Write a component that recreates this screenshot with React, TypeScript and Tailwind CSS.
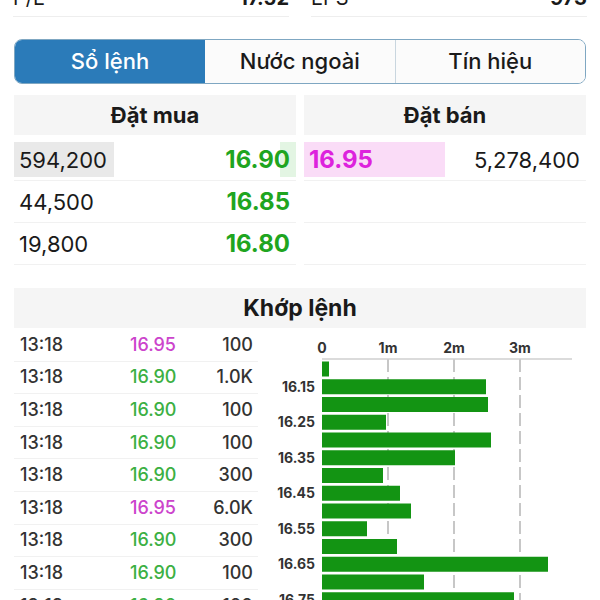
import React from "react";

const trades = [
  { t: "13:18", p: "16.95", v: "100", up: true },
  { t: "13:18", p: "16.90", v: "1.0K", up: false },
  { t: "13:18", p: "16.90", v: "100", up: false },
  { t: "13:18", p: "16.90", v: "100", up: false },
  { t: "13:18", p: "16.90", v: "300", up: false },
  { t: "13:18", p: "16.95", v: "6.0K", up: true },
  { t: "13:18", p: "16.90", v: "300", up: false },
  { t: "13:18", p: "16.90", v: "100", up: false },
  { t: "13:18", p: "16.90", v: "100", up: false },
];

const bars = [7, 164, 166, 64, 169, 133, 61, 78, 89, 45, 75, 226, 102, 192];
const labels: Record<number, string> = {
  1: "16.15",
  3: "16.25",
  5: "16.35",
  7: "16.45",
  9: "16.55",
  11: "16.65",
  13: "16.75",
};

function Chart() {
  const x0 = 64;
  return (
    <svg width="342" height="272" className="block shrink-0" style={{ fontFamily: "Inter, sans-serif" }}>
      {["0", "1m", "2m", "3m"].map((l, i) => (
        <text key={l} x={x0 + i * 66} y={25} fontSize="14" fontWeight="700" fill="#333" textAnchor="middle">
          {l}
        </text>
      ))}
      {[1, 2, 3].map((i) => (
        <line key={i} x1={x0 + i * 66} x2={x0 + i * 66} y1={31} y2={272} stroke="#b5b5b5" strokeWidth="1.5" strokeDasharray="13 5" />
      ))}
      <line x1={x0} x2={314} y1={31} y2={31} stroke="#cfcfcf" strokeWidth="1.5" />
      {bars.map((w, i) => {
        const y = 33.5 + i * 17.75;
        return (
          <g key={i}>
            <rect x={x0} y={y} width={w} height={15} fill="#139413" />
            {labels[i] && (
              <text x={57} y={y + 12.5} fontSize="14" fontWeight="700" fill="#333" textAnchor="end">
                {labels[i]}
              </text>
            )}
          </g>
        );
      })}
    </svg>
  );
}

export default function App() {
  return (
    <div
      className="w-[600px] h-[600px] overflow-hidden bg-white text-[#1a1a1a]"
      style={{ fontFamily: "Inter, 'Noto Sans', sans-serif" }}
    >
      {/* Top stats row (cut off) */}
      <div className="flex gap-[22px] px-[13px] -mt-[21px]">
        <div className="flex-1 h-[38px] flex items-center justify-between border-b border-[#eeeeee] text-[20px] leading-none">
          <span>P/E</span>
          <span className="font-bold">17.52</span>
        </div>
        <div className="flex-1 h-[38px] flex items-center justify-between border-b border-[#eeeeee] text-[20px] leading-none">
          <span>EPS</span>
          <span className="font-bold">973</span>
        </div>
      </div>

      {/* Tabs */}
      <div className="mx-[14px] mt-[22px] h-[45px] flex rounded-[8px] border border-[#7fa7c2] overflow-hidden text-[22px] font-medium">
        <div className="w-[190px] flex items-center justify-center bg-[#2b7bb9] text-white">Sổ lệnh</div>
        <div className="flex-1 flex items-center justify-center bg-[#fbfbfb] border-r border-[#c9d6df]">Nước ngoài</div>
        <div className="flex-1 flex items-center justify-center bg-[#fbfbfb]">Tín hiệu</div>
      </div>

      {/* Order book */}
      <div className="mx-[14px] mt-[11px] flex gap-[8px]">
        <div className="flex-1">
          <div className="h-[40px] flex items-center justify-center bg-[#f5f5f5] text-[22px] font-bold">Đặt mua</div>
          <div className="mt-[4px]">
            {[
              ["594,200", "16.90", 100, 16],
              ["44,500", "16.85", 0, 0],
              ["19,800", "16.80", 0, 0],
            ].map(([v, p, wl, wr], i) => (
              <div key={i} className="relative h-[42px] flex items-center justify-between border-b border-[#f1f1f1] text-[22px] leading-none">
                {(wl as number) > 0 && (
                  <div className="absolute left-0 top-[3px] bottom-[3px] bg-[#e9e9e9]" style={{ width: wl as number }} />
                )}
                {(wr as number) > 0 && (
                  <div className="absolute right-0 top-[3px] bottom-[3px] bg-[#e3f5e3]" style={{ width: wr as number }} />
                )}
                <span className="relative pl-[5px]">{v}</span>
                <span className="relative pr-[6px] text-[24px] font-bold text-[#1fa51f]">{p}</span>
              </div>
            ))}
          </div>
        </div>
        <div className="flex-1">
          <div className="h-[40px] flex items-center justify-center bg-[#f5f5f5] text-[22px] font-bold">Đặt bán</div>
          <div className="mt-[4px]">
            <div className="relative h-[42px] flex items-center justify-between border-b border-[#f1f1f1] text-[22px] leading-none">
              <div className="absolute left-0 top-[3px] bottom-[3px] w-[141px] bg-[#fadcf7]" />
              <span className="relative pl-[5px] text-[24px] font-bold text-[#dd22dd]">16.95</span>
              <span className="relative pr-[6px]">5,278,400</span>
            </div>
            <div className="h-[42px] border-b border-[#f1f1f1]" />
            <div className="h-[42px] border-b border-[#f1f1f1]" />
          </div>
        </div>
      </div>

      {/* Khớp lệnh */}
      <div className="mx-[14px] mt-[23px] h-[40px] flex items-center justify-center bg-[#f5f5f5] text-[23px] font-bold">
        Khớp lệnh
      </div>
      <div className="flex">
        <div className="ml-[14px] w-[244px] shrink-0 pt-[1px]">
          {trades.map((r, i) => (
            <div
              key={i}
              className="h-[32.6px] grid grid-cols-[116px_1fr_auto] items-center border-b border-[#f1f1f1] text-[18px] leading-none font-medium"
            >
              <span className="pl-[6px] text-[#333]">{r.t}</span>
              <span className={r.up ? "text-[#cc44cc]" : "text-[#3cb043]"}>{r.p}</span>
              <span className="pr-[5px] text-[#333] text-right">{r.v}</span>
            </div>
          ))}
        </div>
        <Chart />
      </div>
    </div>
  );
}
